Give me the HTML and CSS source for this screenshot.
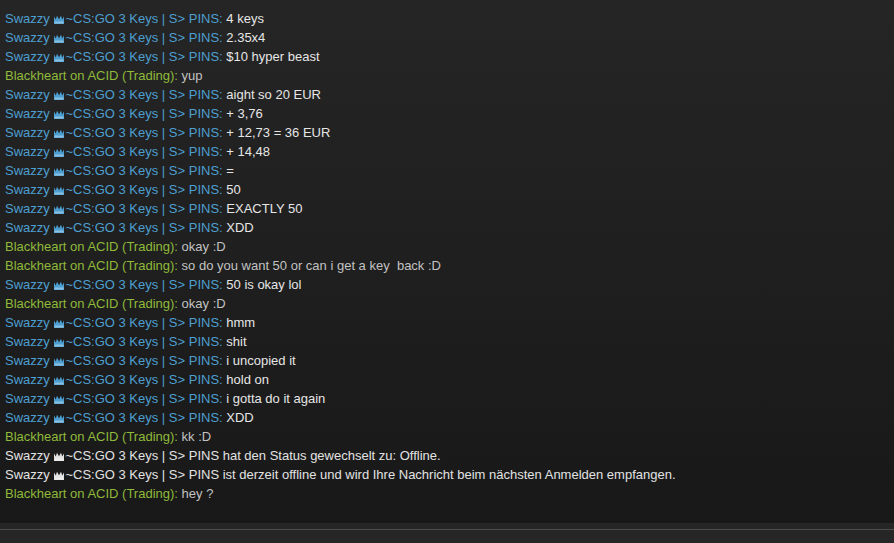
FILE: index.html
```html
<!DOCTYPE html>
<html>
<head>
<meta charset="utf-8">
<link rel="stylesheet" href="styles.css">
</head>
<body>
<svg width="0" height="0" class="defs" aria-hidden="true">
  <defs>
    <g id="crown">
      <path d="M0 1.5 L1.8 4.6 L3 0.8 L5 4.2 L7 0.8 L8.2 4.6 L10 1.5 V9 H0 Z" fill="currentColor"/>
      <rect x="0.5" y="6.5" width="9" height="2" fill="#ffffff" opacity="0.35"/>
    </g>
  </defs>
</svg>
<div class="chat">
  <div class="log">
    <div class="line"><span class="sw">Swazzy <svg class="crown" viewBox="0 0 10 9"><use href="#crown"/></svg>~CS:GO 3 Keys | S&gt; PINS:</span> <span class="m">4 keys</span></div>
    <div class="line"><span class="sw">Swazzy <svg class="crown" viewBox="0 0 10 9"><use href="#crown"/></svg>~CS:GO 3 Keys | S&gt; PINS:</span> <span class="m">2.35x4</span></div>
    <div class="line"><span class="sw">Swazzy <svg class="crown" viewBox="0 0 10 9"><use href="#crown"/></svg>~CS:GO 3 Keys | S&gt; PINS:</span> <span class="m">$10 hyper beast</span></div>
    <div class="line"><span class="bh">Blackheart on ACID (Trading):</span> <span class="g">yup</span></div>
    <div class="line"><span class="sw">Swazzy <svg class="crown" viewBox="0 0 10 9"><use href="#crown"/></svg>~CS:GO 3 Keys | S&gt; PINS:</span> <span class="m">aight so 20 EUR</span></div>
    <div class="line"><span class="sw">Swazzy <svg class="crown" viewBox="0 0 10 9"><use href="#crown"/></svg>~CS:GO 3 Keys | S&gt; PINS:</span> <span class="m">+ 3,76</span></div>
    <div class="line"><span class="sw">Swazzy <svg class="crown" viewBox="0 0 10 9"><use href="#crown"/></svg>~CS:GO 3 Keys | S&gt; PINS:</span> <span class="m">+ 12,73 = 36 EUR</span></div>
    <div class="line"><span class="sw">Swazzy <svg class="crown" viewBox="0 0 10 9"><use href="#crown"/></svg>~CS:GO 3 Keys | S&gt; PINS:</span> <span class="m">+ 14,48</span></div>
    <div class="line"><span class="sw">Swazzy <svg class="crown" viewBox="0 0 10 9"><use href="#crown"/></svg>~CS:GO 3 Keys | S&gt; PINS:</span> <span class="m">=</span></div>
    <div class="line"><span class="sw">Swazzy <svg class="crown" viewBox="0 0 10 9"><use href="#crown"/></svg>~CS:GO 3 Keys | S&gt; PINS:</span> <span class="m">50</span></div>
    <div class="line"><span class="sw">Swazzy <svg class="crown" viewBox="0 0 10 9"><use href="#crown"/></svg>~CS:GO 3 Keys | S&gt; PINS:</span> <span class="m">EXACTLY 50</span></div>
    <div class="line"><span class="sw">Swazzy <svg class="crown" viewBox="0 0 10 9"><use href="#crown"/></svg>~CS:GO 3 Keys | S&gt; PINS:</span> <span class="m">XDD</span></div>
    <div class="line"><span class="bh">Blackheart on ACID (Trading):</span> <span class="g">okay :D</span></div>
    <div class="line"><span class="bh">Blackheart on ACID (Trading):</span> <span class="g">so do you want 50 or can i get a key&nbsp; back :D</span></div>
    <div class="line"><span class="sw">Swazzy <svg class="crown" viewBox="0 0 10 9"><use href="#crown"/></svg>~CS:GO 3 Keys | S&gt; PINS:</span> <span class="m">50 is okay lol</span></div>
    <div class="line"><span class="bh">Blackheart on ACID (Trading):</span> <span class="g">okay :D</span></div>
    <div class="line"><span class="sw">Swazzy <svg class="crown" viewBox="0 0 10 9"><use href="#crown"/></svg>~CS:GO 3 Keys | S&gt; PINS:</span> <span class="m">hmm</span></div>
    <div class="line"><span class="sw">Swazzy <svg class="crown" viewBox="0 0 10 9"><use href="#crown"/></svg>~CS:GO 3 Keys | S&gt; PINS:</span> <span class="m">shit</span></div>
    <div class="line"><span class="sw">Swazzy <svg class="crown" viewBox="0 0 10 9"><use href="#crown"/></svg>~CS:GO 3 Keys | S&gt; PINS:</span> <span class="m">i uncopied it</span></div>
    <div class="line"><span class="sw">Swazzy <svg class="crown" viewBox="0 0 10 9"><use href="#crown"/></svg>~CS:GO 3 Keys | S&gt; PINS:</span> <span class="m">hold on</span></div>
    <div class="line"><span class="sw">Swazzy <svg class="crown" viewBox="0 0 10 9"><use href="#crown"/></svg>~CS:GO 3 Keys | S&gt; PINS:</span> <span class="m">i gotta do it again</span></div>
    <div class="line"><span class="sw">Swazzy <svg class="crown" viewBox="0 0 10 9"><use href="#crown"/></svg>~CS:GO 3 Keys | S&gt; PINS:</span> <span class="m">XDD</span></div>
    <div class="line"><span class="bh">Blackheart on ACID (Trading):</span> <span class="g">kk :D</span></div>
    <div class="line sys">Swazzy <svg class="crown" viewBox="0 0 10 9"><use href="#crown"/></svg>~CS:GO 3 Keys | S&gt; PINS hat den Status gewechselt zu: Offline.</div>
    <div class="line sys">Swazzy <svg class="crown" viewBox="0 0 10 9"><use href="#crown"/></svg>~CS:GO 3 Keys | S&gt; PINS ist derzeit offline und wird Ihre Nachricht beim nächsten Anmelden empfangen.</div>
    <div class="line"><span class="bh">Blackheart on ACID (Trading):</span> <span class="g">hey ?</span></div>
  </div>
  <div class="footer"><div class="rule"></div></div>
</div>
</body>
</html>
```
FILE: styles.css
```css
html, body {
  margin: 0;
  padding: 0;
  width: 894px;
  height: 543px;
  overflow: hidden;
  background: #262626;
}
.defs {
  position: absolute;
  width: 0;
  height: 0;
}
.chat {
  display: flex;
  flex-direction: column;
  height: 543px;
  font-family: "Liberation Sans", Arial, sans-serif;
  font-size: 13px;
}
.log {
  height: 523px;
  box-sizing: border-box;
  padding: 9px 0 0 5px;
  background: linear-gradient(to bottom, #252525 0%, #1f1f1f 50%, #181818 100%);
}
.line {
  height: 19px;
  line-height: 19px;
  white-space: nowrap;
  color: #e6e6e6;
}
.sw { color: #4d9fd1; }
.bh { color: #8fba3a; }
.m { color: #e6e6e6; }
.g { color: #c2c2c2; }
.sys { color: #e2e2e2; }
.crown {
  width: 10px;
  height: 9px;
  vertical-align: -1px;
  margin: 0 1px 0 1px;
}
.footer {
  flex: 1;
  background: #262626;
  padding-top: 6px;
}
.rule {
  height: 1px;
  background: #4b4b4b;
}
```
